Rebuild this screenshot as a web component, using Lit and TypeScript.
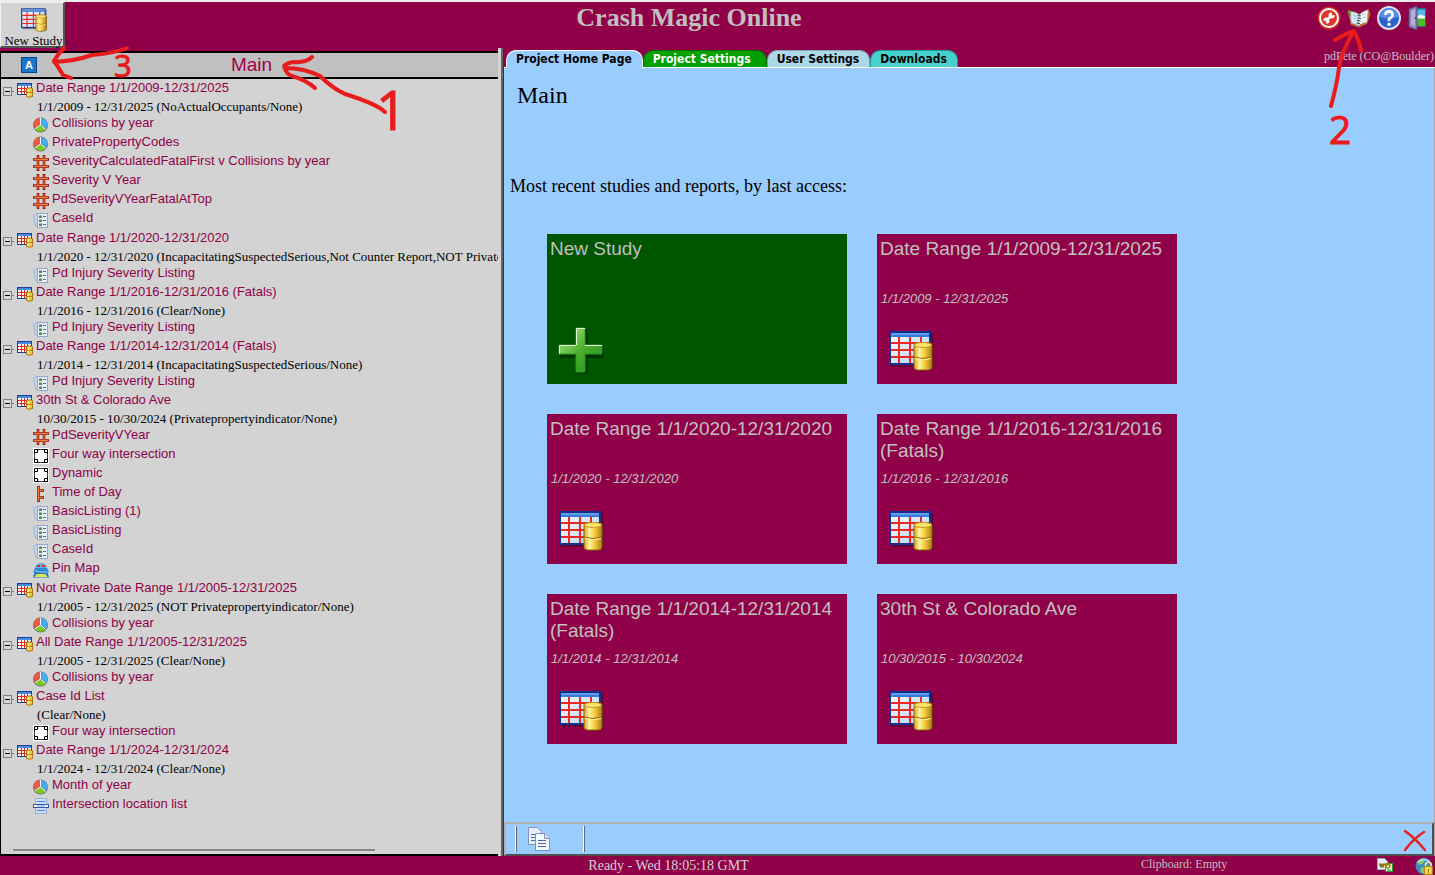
import { LitElement, html, svg, css, type TemplateResult } from "lit";
import { customElement } from "lit/decorators.js";

type IconName = "study" | "pie" | "hash" | "list" | "cross" | "time" | "map" | "loc";

interface Report { icon: IconName; name: string; }
interface Study { title: string; sub: string; items: Report[]; }

const r = (icon: IconName, name: string): Report => ({ icon, name });

const STUDIES: Study[] = [
  {
    title: "Date Range 1/1/2009-12/31/2025",
    sub: "1/1/2009 - 12/31/2025 (NoActualOccupants/None)",
    items: [
      r("pie", "Collisions by year"),
      r("pie", "PrivatePropertyCodes"),
      r("hash", "SeverityCalculatedFatalFirst v Collisions by year"),
      r("hash", "Severity V Year"),
      r("hash", "PdSeverityVYearFatalAtTop"),
      r("list", "CaseId"),
    ],
  },
  {
    title: "Date Range 1/1/2020-12/31/2020",
    sub: "1/1/2020 - 12/31/2020 (IncapacitatingSuspectedSerious,Not Counter Report,NOT Privatepropertyindicator/None)",
    items: [r("list", "Pd Injury Severity Listing")],
  },
  {
    title: "Date Range 1/1/2016-12/31/2016 (Fatals)",
    sub: "1/1/2016 - 12/31/2016 (Clear/None)",
    items: [r("list", "Pd Injury Severity Listing")],
  },
  {
    title: "Date Range 1/1/2014-12/31/2014 (Fatals)",
    sub: "1/1/2014 - 12/31/2014 (IncapacitatingSuspectedSerious/None)",
    items: [r("list", "Pd Injury Severity Listing")],
  },
  {
    title: "30th St & Colorado Ave",
    sub: "10/30/2015 - 10/30/2024 (Privatepropertyindicator/None)",
    items: [
      r("hash", "PdSeverityVYear"),
      r("cross", "Four way intersection"),
      r("cross", "Dynamic"),
      r("time", "Time of Day"),
      r("list", "BasicListing (1)"),
      r("list", "BasicListing"),
      r("list", "CaseId"),
      r("map", "Pin Map"),
    ],
  },
  {
    title: "Not Private Date Range 1/1/2005-12/31/2025",
    sub: "1/1/2005 - 12/31/2025 (NOT Privatepropertyindicator/None)",
    items: [r("pie", "Collisions by year")],
  },
  {
    title: "All Date Range 1/1/2005-12/31/2025",
    sub: "1/1/2005 - 12/31/2025 (Clear/None)",
    items: [r("pie", "Collisions by year")],
  },
  {
    title: "Case Id List",
    sub: "(Clear/None)",
    items: [r("cross", "Four way intersection")],
  },
  {
    title: "Date Range 1/1/2024-12/31/2024",
    sub: "1/1/2024 - 12/31/2024 (Clear/None)",
    items: [r("pie", "Month of year"), r("loc", "Intersection location list")],
  },
];

const TILES = [
  { title: "Date Range 1/1/2009-12/31/2025", dates: "1/1/2009 - 12/31/2025" },
  { title: "Date Range 1/1/2020-12/31/2020", dates: "1/1/2020 - 12/31/2020" },
  { title: "Date Range 1/1/2016-12/31/2016 (Fatals)", dates: "1/1/2016 - 12/31/2016" },
  { title: "Date Range 1/1/2014-12/31/2014 (Fatals)", dates: "1/1/2014 - 12/31/2014" },
  { title: "30th St & Colorado Ave", dates: "10/30/2015 - 10/30/2024" },
];

const GLYPHS: Record<IconName, TemplateResult> = {
  study: svg`
    <rect x="0.5" y="1.5" width="14" height="11" fill="#fff" stroke="#1c3f94"/>
    <rect x="1" y="2" width="13" height="2" fill="#4a8ae0"/>
    <path d="M1 6.5h13M1 9.5h13M4.5 4v8M7.5 4v8M10.5 4v8" stroke="#f0241c" fill="none"/>
    <path d="M9.5 6.5q3-1.5 6 0v8q-3 1.5-6 0z" fill="#f3c93c" stroke="#a87410"/>
    <path d="M11.5 7v7" stroke="#fff2a8"/><path d="M10 10.5h5" stroke="#b88518"/>`,
  pie: svg`
    <circle cx="7.5" cy="8" r="7.5" fill="#5f7078"/>
    <path d="M7 7.5L7 1A6.5 6.5 0 0 0 1.6 11z" fill="#ee5a44"/>
    <path d="M8.3 7.5V1A6.7 6.7 0 0 1 13 11.8z" fill="#45aef0"/>
    <path d="M7.5 8.5L2 12A6.6 6.6 0 0 0 12.500 12.500z" fill="#7fca1e"/>
    <path d="M7.5 1v7L2 11.8M7.500 8l5 4.300" stroke="#fff" fill="none"/>`,
  hash: svg`
    <path d="M5 0v16M11 0v16M0 4.500h16M0 11.500h16" stroke="#98100a" stroke-width="2.600" fill="none"/>
    <path d="M5 1v14M11 1v14M1 4.500h14M1 11.500h14" stroke="#ff8a3c" stroke-width=".9" fill="none"/>`,
  list: svg`
    <path d="M0.5 3l4-1.5v12L2.5 14z" fill="#c3d3ec" stroke="#a4b4d4"/>
    <rect x="4.5" y="1.5" width="10" height="14" fill="#e6f0fc" stroke="#94a6d0"/>
    <path d="M6 3.500h3v2.500H6zM6 7.500h3v2.500H6zM6 11.500h3v2.500H6z" fill="#5d8a3c"/>
    <path d="M10 4.500h3M10 8.500h3M10 12.500h3" stroke="#4a69a8"/>`,
  cross: svg`
    <rect width="16" height="16" fill="#fff"/>
    <path d="M1.500 1.500h13v13h-13z" fill="none" stroke="#000"/>
    <path d="M4.500 1v3.500H1M11.500 1v3.500H15M4.500 15v-3.500H1M11.500 15v-3.500H15" fill="none" stroke="#000"/>
    <path d="M6 1.500h4M6 14.500h4M1.500 6v4M14.500 6v4" stroke="#444"/>`,
  time: svg`
    <path d="M5.500 0v16M5 4.500h6M5 11.500h6" stroke="#98100a" stroke-width="2.600" fill="none"/>
    <path d="M5.500 1v14M6 4.500h4M6 11.500h4" stroke="#ff8a3c" stroke-width=".9" fill="none"/>`,
  map: svg`
    <path d="M2 9h12l2 6.500H0z" fill="#2a72c8"/><path d="M1.500 15l2-3h9l2 3z" fill="#d8e84a"/>
    <path d="M2 6h12l2 4.500H0z" fill="#2f86dc"/><path d="M2 8.500l4 1.500h8" stroke="#8fd4f8" fill="none"/>
    <path d="M2 6q1-5 6-5T14 6z" fill="#5cb4ee"/>
    <rect x="4" y="3" width="3" height="2" fill="#e8281c"/><rect x="9" y="3" width="3" height="2" fill="#e8281c"/>`,
  loc: svg`
    <rect x="2.500" y="0.500" width="11" height="15" fill="#cfe0f5" stroke="#9ab0dc"/>
    <path d="M4 3.500h8M4 12.500h8" stroke="#3c8ad8"/>
    <rect x="0.500" y="6.500" width="15" height="3" fill="#fff" stroke="#3a56a8"/>
    <path d="M4 8h8" stroke="#58a4e8"/>`,
};

const icon = (name: IconName) =>
  html`<svg class="icon" viewBox="0 0 16 16" width="16" height="16" aria-hidden="true">${GLYPHS[name]}</svg>`;

const bigStudy = (size: number) => html`
  <svg viewBox="0 0 48 48" width=${size} height=${size} aria-hidden="true">
    <defs>
      <linearGradient id="sheet" x1="0" y1="0" x2="1" y2="1"><stop offset="0" stop-color="#fff"/><stop offset="1" stop-color="#a8d0fa"/></linearGradient>
      <linearGradient id="gold"><stop offset="0" stop-color="#d9a021"/><stop offset=".3" stop-color="#fff6a0"/><stop offset=".6" stop-color="#f4ca3c"/><stop offset="1" stop-color="#b07c12"/></linearGradient>
    </defs>
    <rect x="4" y="6" width="42" height="34" rx="1" fill="#000" opacity=".3"/>
    <rect x="3" y="5" width="40" height="32" fill="url(#sheet)" stroke="#14318c" stroke-width="2"/>
    <rect x="4" y="6" width="38" height="4" fill="#3a7cdc"/><path d="M4 7h38" stroke="#8abaf6"/>
    <path d="M4 16h38M4 23h38M4 30h38M12 10v26M23 10v26M34 10v26" stroke="#f5271c" stroke-width="2"/>
    <path d="M28 17v25q9 4 18 0V17z" fill="#000" opacity=".35"/>
    <path d="M27 18q0-2 3-2h12q3 0 3 2v22q0 3-4 3H31q-4 0-4-3z" fill="url(#gold)" stroke="#96690c"/>
    <ellipse cx="36" cy="18" rx="8.500" ry="2.500" fill="#fbe56c" stroke="#c89a28"/>
    <path d="M27 30q9 3 18 0" stroke="#996c10" fill="none"/><path d="M28 31.500q8 3 16 0" stroke="#fff3a0" fill="none"/>
  </svg>`;

@customElement("app-root")
export class AppRoot extends LitElement {
  static styles = css`
    :host {
      display: flex;
      flex-direction: column;
      position: relative;
      height: 100vh;
      overflow: hidden;
      box-sizing: border-box;
      border-top: 2px solid #ececec;
      background: #900048;
      color: #000;
      font-family: "Liberation Serif", serif;
      font-size: 13px;
    }
    * { box-sizing: border-box; }
    svg { display: block; flex: none; }
    button { font: inherit; color: inherit; border: 0; background: none; padding: 0; cursor: pointer; }
    a { color: inherit; text-decoration: none; }
    h1, h2, p, ul { margin: 0; padding: 0; font-weight: normal; }
    ul { list-style: none; }

    .header { display: flex; height: 46px; flex: none; }
    .new-study {
      display: flex; flex-direction: column; align-items: center;
      width: 65px; padding: 3px 0 0 3px;
      background: #d3d3d3; border: 1px solid #eee; border-right: 2px solid #555; border-bottom: 2px solid #555;
      line-height: 14px; white-space: nowrap;
    }
    .app-title { flex: 1; text-align: center; font-size: 26px; font-weight: bold; line-height: 32px; color: #c0c0c0; }
    .tools { display: flex; gap: 6px; width: 122px; padding: 4px 0 0 4px; height: 28px; }

    .body { flex: 1; min-height: 0; display: grid; grid-template-columns: 498px 6px 1fr; }
    .sidebar { min-height: 0; padding-top: 3px; display: flex; flex-direction: column; }
    .side-box {
      flex: 1; min-height: 0; display: flex; flex-direction: column;
      border: solid #000; border-width: 2px 0 2px 1px; background: #d3d3d3; overflow: hidden;
    }
    .side-head {
      display: grid; grid-template-columns: 36px 1fr 52px; align-items: center; flex: none;
      height: 26px; padding-left: 20px; background: #c0c0c0; border-bottom: 2px solid #000;
    }
    .side-head h2 { text-align: center; font: 19px/22px "Liberation Sans", sans-serif; color: #a00048; }
    .tree { flex: 1; min-height: 0; overflow: hidden; }
    .node { display: flex; height: 18px; padding-left: 2px; }
    .node .icon { margin: 3px 3px 0 3px; }
    .toggle { padding-top: 7px; height: 18px; }
    .label { font: 13px/18px "Liberation Sans", sans-serif; color: #900048; white-space: nowrap; }
    .sub { height: 17px; padding-left: 36px; line-height: 20px; white-space: nowrap; }
    .leaves:has(> :nth-child(3)) { padding-bottom: 1px; }
    .leaf { display: flex; gap: 3px; height: 19px; padding-left: 32px; }
    .leaf .icon { margin-top: 3px; }
    .scroll { flex: none; width: 362px; height: 2px; margin: 0 0 3px 12px; background: #888; }

    .splitter { background: #d3d3d3; border-right: 2px solid #666; margin-right: 1px; }

    .main { min-width: 0; min-height: 0; display: flex; flex-direction: column; }
    .tab-row { display: flex; justify-content: space-between; align-items: flex-end; height: 19px; flex: none; }
    .tabs { display: flex; padding-left: 2px; position: relative; top: 1px; height: 18px; }
    .tab {
      padding: 0 10px 0 9px; height: 17px; border: 1px solid; border-bottom: 0; border-radius: 10px 10px 0 0;
      font: bold 12px/15px "DejaVu Sans Condensed", "DejaVu Sans", sans-serif; font-stretch: condensed; white-space: nowrap;
    }
    .home { background: #99ccff; border-color: #fff; height: 18px; }
    .settings { background: #00a000; border-color: #007000; color: #fff; padding-right: 15px; }
    .user { background: #add8e6; border-color: #7fa4b4; }
    .downloads { background: #48d1cc; border-color: #209a96; }
    .who { padding-right: 1px; font-size: 12px; line-height: 22px; color: #c0c0c0; white-space: nowrap; }

    .page {
      flex: 1; min-height: 0; display: flex; flex-direction: column;
      background: #99ccff; border-top: 1px solid #fff; border-right: 1px solid #aaa49e;
    }
    .page-title { padding: 13px 0 0 13px; font-size: 24px; line-height: 28px; }
    .recent { padding: 66px 0 0 6px; font-size: 18px; line-height: 22px; }
    .tiles { flex: 1; display: grid; grid-template-columns: repeat(auto-fill, 300px); grid-auto-rows: 150px; gap: 30px; padding: 37px 43px 0; }
    .tile {
      display: grid; grid-template-rows: 50px 22px 1fr; padding: 4px 3px 3px; background: #900048; color: #c0c0c0;
      font: 19px/22px "Liberation Sans", sans-serif;
    }
    .tile svg { margin: 17px 0 0 7px; }
    .new { background: #005500; }
    .dates { font-size: 13px; font-style: italic; padding-left: 1px; }

    .toolbar {
      flex: none; display: flex; align-items: center; height: 34px; padding-left: 9px;
      border: 2px solid #b0b0b0; border-right-color: #505050; border-bottom-color: #505050;
    }
    .sep { width: 2px; height: 26px; border-left: 1px solid #fff; border-right: 1px solid #666; }
    .copy { margin: 0 32px 0 10px; }
    .close { margin: 4px 6px 0 auto; }

    .status { flex: none; display: grid; grid-template-columns: 41% 1fr 236px 58px; height: 19px; color: #d3d3d3; }
    .ready { grid-column: 2; font-size: 14px; line-height: 19px; }
    .clip { font-size: 12px; line-height: 16px; color: #c0c0c0; }
    .badges { display: flex; justify-content: space-between; padding-top: 1px; }

    .ink { position: absolute; top: -2px; left: 0; pointer-events: none; }
    .ink-right { left: auto; right: 0; }
    .ink path { fill: none; stroke: #e81c1c; stroke-width: 4px; stroke-linecap: round; stroke-linejoin: round; }
    .ink text { fill: #e81c1c; font-family: "Open Sans", sans-serif; font-weight: 400; stroke: #e81c1c; stroke-width: 1px; }
  `;

  private header() {
    return html`
      <header class="header">
        <button class="new-study">${bigStudy(28)}<span>New Study</span></button>
        <h1 class="app-title">Crash Magic Online</h1>
        <nav class="tools" aria-label="Tools">
          <button aria-label="Administration">
            <svg viewBox="0 0 24 24" width="24" height="24">
              <circle cx="12" cy="12" r="11.500" fill="#d8281c"/><circle cx="12" cy="12" r="9" fill="#e0352a" stroke="#fff" stroke-width="2"/>
              <path d="M9 15l6-6" stroke="#fff" stroke-width="2.400"/>
              <path d="M17.500 9l-2 .5-1-1 .5-2a3 3 0 1 0 2.500 2.500zM6.500 15l2-.5 1 1-.5 2a3 3 0 1 0-2.500-2.500z" fill="#fff"/>
            </svg>
          </button>
          <button aria-label="Projects">
            <svg viewBox="0 0 24 24" width="24" height="24">
              <path d="M0.500 5L4 19l8 2.500L20 18l3.500-10-2-5-9 5-9-3.500z" fill="#c86424"/>
              <path d="M3 6q5-1 9.500 3L11 20q-3-3-6.500-2.500z" fill="#d4e8fb" stroke="#8aa0b8" stroke-width=".5"/>
              <path d="M12.500 9q3-4 8.500-5L20 16.500q-5 0-9 3.500z" fill="#f4faff" stroke="#8aa0b8" stroke-width=".5"/>
              <path d="M5.500 9l4 1.500M6 12l3.500 1M15 9l4-1.500M15 12l4-1.500" stroke="#9cc6ee"/>
              <path d="M10.500 9.500l3.500.5M10.500 12l3.500.5M10 14.500l3.500.5M9.500 17l3.500.5" stroke="#444"/>
              <path d="M1 6l2-1M2 9l2-1" stroke="#3faa30" stroke-width="2"/>
            </svg>
          </button>
          <button aria-label="Help">
            <svg viewBox="0 0 24 24" width="24" height="24">
              <circle cx="12" cy="12" r="12" fill="#d8e2f4"/><circle cx="12" cy="12" r="10" fill="#2c62cc"/>
              <path d="M3 11a9 9 0 0 1 18 0q-9 3-18 0z" fill="#5b8ee6"/>
              <path d="M8.500 9q0-3.500 3.500-3.500T15.500 9q0 2-2 3t-1.500 3" fill="none" stroke="#fff" stroke-width="2.800"/><circle cx="12" cy="18.200" r="1.700" fill="#fff"/>
            </svg>
          </button>
          <button aria-label="Log out">
            <svg viewBox="0 0 24 24" width="24" height="24">
              <path d="M9 2h10v19H9z" fill="#1c7088"/><path d="M10 3.500h8V11h-8z" fill="#58b8f0"/><path d="M10 10l4-1.500 4 2V13h-8z" fill="#f4fafc"/><path d="M10 12.500h8V20h-8z" fill="#54b828"/>
              <path d="M2 3l8-3v24l-8-3z" fill="#8c88bc" stroke="#4c4880"/><path d="M4 5l4-2v17l-4-1z" fill="#b4b0d8"/><circle cx="8.500" cy="12" r="1" fill="#403c70"/>
            </svg>
          </button>
        </nav>
      </header>`;
  }

  private study(s: Study) {
    return html`
      <li>
        <div class="node">
          <button class="toggle" aria-label="Collapse">
            <svg viewBox="0 0 11 10" width="11" height="10"><rect x="0.500" y="0.500" width="8" height="8" fill="#d8d8d8" stroke="#808080"/><path d="M2 4.500h5" stroke="#000"/><path d="M9 4.500h2" stroke="#808080"/></svg>
          </button>
          ${icon("study")}<a class="label" href="#">${s.title}</a>
        </div>
        <div class="sub">${s.sub}</div>
        <ul class="leaves">
          ${s.items.map((i) => html`<li class="leaf">${icon(i.icon)}<a class="label" href="#">${i.name}</a></li>`)}
        </ul>
      </li>`;
  }

  private sidebar() {
    return html`
      <aside class="sidebar">
        <div class="side-box">
          <div class="side-head">
            <button aria-label="Sort by name">
              <svg viewBox="0 0 16 16" width="16" height="16"><rect x="0.500" y="0.500" width="15" height="15" fill="#1878cc" stroke="#0a4288"/><text x="8" y="12" text-anchor="middle" font-family="Liberation Sans" font-weight="bold" font-size="11" fill="#fff">A</text></svg>
            </button>
            <h2>Main</h2>
          </div>
          <ul class="tree">${STUDIES.map((s) => this.study(s))}</ul>
          <div class="scroll"></div>
        </div>
      </aside>`;
  }

  private main() {
    return html`
      <main class="main">
        <div class="tab-row">
          <div class="tabs" role="tablist">
            <button class="tab home" role="tab" aria-selected="true">Project Home Page</button>
            <button class="tab settings" role="tab">Project Settings</button>
            <button class="tab user" role="tab">User Settings</button>
            <button class="tab downloads" role="tab">Downloads</button>
          </div>
          <span class="who">pdPete (CO@Boulder)</span>
        </div>
        <section class="page">
          <h2 class="page-title">Main</h2>
          <p class="recent">Most recent studies and reports, by last access:</p>
          <div class="tiles">
            <a class="tile new" href="#">
              <span>New Study</span><span></span>
              <svg viewBox="0 0 48 48" width="48" height="48" aria-hidden="true">
                <defs><linearGradient id="leafy" x1="0" y1="0" x2="1" y2="1"><stop offset="0" stop-color="#b4f088"/><stop offset=".5" stop-color="#4cb030"/><stop offset="1" stop-color="#1e8c18"/></linearGradient></defs>
                <path d="M20 3h11v17h16v11H31v16H20V31H3V20h17z" fill="#000" opacity=".35"/>
                <path d="M19 2q0-1 1-1h7q1 0 1 1v16h16q1 0 1 1v7q0 1-1 1H28v17q0 1-1 1h-7q-1 0-1-1V27H3q-1 0-1-1v-7q0-1 1-1h16z" fill="url(#leafy)" stroke="#2e9a22"/>
                <path d="M19.500 18V1.500H28M2.500 27v-8.500H19M28 18.500h17" fill="none" stroke="#e8ffdc"/>
              </svg>
            </a>
            ${TILES.map((t) => html`
              <a class="tile" href="#"><span>${t.title}</span><span class="dates">${t.dates}</span>${bigStudy(48)}</a>`)}
          </div>
          <div class="toolbar">
            <span class="sep"></span>
            <button class="copy" aria-label="Copy">
              <svg viewBox="0 0 24 26" width="24" height="26">
                <path d="M1.500 1.500h9l4 4v13h-13z" fill="#e4f0fd" stroke="#8490c4"/><path d="M4 8.500h6M4 11.500h6M4 14.500h6" stroke="#5464a8"/>
                <path d="M8.500 7.500h9l5 5v12h-14z" fill="#f0f7ff" stroke="#8490c4"/><path d="M17.500 7.500v5h5" fill="#dce4f4" stroke="#8c8c98"/><path d="M11 14.500h8M11 17.500h8M11 20.500h8" stroke="#5464a8"/>
              </svg>
            </button>
            <span class="sep"></span>
            <button class="close" aria-label="Delete">
              <svg viewBox="0 0 22 22" width="22" height="22"><path d="M1 1q10 7 20 19M20 2Q10 8 1 20" fill="none" stroke="#e8201c" stroke-width="2.500" stroke-linecap="round"/></svg>
            </button>
          </div>
        </section>
      </main>`;
  }

  private footer() {
    return html`
      <footer class="status">
        <span class="ready">Ready - Wed 18:05:18 GMT</span>
        <span class="clip">Clipboard: Empty</span>
        <span class="badges">
          <svg viewBox="0 0 16 16" width="16" height="16" aria-hidden="true">
            <path d="M0.500 1.500h7l3 3v8h-10z" fill="#e8f0fa" stroke="#9cacd0"/><path d="M8.500 6.500h7v8h-7z" fill="#eaf8e4" stroke="#2e9a28"/>
            <path d="M2 7.500h11M3 9.500h4" stroke="#8c7410" stroke-width="2"/><circle cx="11" cy="9" r="2" fill="none" stroke="#a48a14" stroke-width="1.500"/><path d="M10 13h4" stroke="#2e9a28"/>
          </svg>
          <svg viewBox="0 0 18 16" width="20" height="18" aria-hidden="true">
            <circle cx="8" cy="8" r="7.500" fill="#3c8cc8"/><path d="M3 3q4-3 6-1l-2 4-4 1zM5 9l4 1-1 5-3-2z" fill="#8cc464"/><path d="M2 5q5-5 11-1" stroke="#c4e4f8" fill="none"/>
            <path d="M9.500 8.500V6q2.500-3 5 0v2.500" fill="none" stroke="#f0e4a0" stroke-width="1.500"/><rect x="8.500" y="8.500" width="7" height="7" fill="#f8dc58" stroke="#b08818"/><path d="M12 11v3" stroke="#8c6408"/>
          </svg>
        </span>
      </footer>`;
  }

  render() {
    return html`
      ${this.header()}
      <div class="body">${this.sidebar()}<div class="splitter"></div>${this.main()}</div>
      ${this.footer()}
      <svg class="ink" width="500" height="180" viewBox="0 0 500 180">
        <path d="M127 48Q116 53 92 55Q75 61 54 62M64 48Q58 54 54 61Q59 68 63 75L71 78"/>
        <path d="M312 57Q306 63 293 62Q287 63 284 66Q286 74 292 76Q306 80 315 88M285 68Q304 68 320 76Q332 88 345 94Q377 104 385 112"/>
        <text x="114" y="77" font-size="31">3</text>
        <text x="376" y="130" font-size="54">1</text>
      </svg>
      <svg class="ink ink-right" width="135" height="180" viewBox="1300 0 135 180">
        <path d="M1335 40Q1349 32 1354 31Q1359 40 1361 50M1354 31Q1341 52 1339 68Q1337 84 1331 106"/>
        <text x="1329" y="144" font-size="39">2</text>
      </svg>`;
  }
}
